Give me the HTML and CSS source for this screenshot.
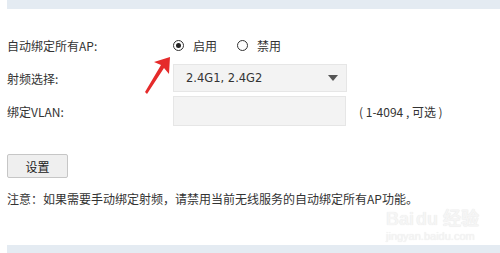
FILE: index.html
```html
<!DOCTYPE html>
<html lang="zh-CN">
<head>
    <meta charset="UTF-8">
    <title>自动绑定射频</title>
    <link rel="stylesheet" href="styles.css">
</head>
<body>
    <div class="bar"></div>

    <div class="form">
        <div class="row">
            <div class="label">自动绑定所有AP:</div>
            <div class="radios">
                <label class="radio"><span class="dot checked"></span>启用</label>
                <label class="radio"><span class="dot"></span>禁用</label>
            </div>
        </div>
        <div class="row">
            <div class="label">射频选择:</div>
            <div class="box select">
                <span>2.4G1, 2.4G2</span>
                <span class="caret"></span>
            </div>
        </div>
        <div class="row">
            <div class="label">绑定VLAN:</div>
            <div class="box"></div>
            <span class="hint">( 1-4094 , 可选 )</span>
        </div>
    </div>

    <button class="btn">设置</button>

    <p class="note">注意：如果需要手动绑定射频，请禁用当前无线服务的自动绑定所有AP功能。</p>

    <div class="watermark">
        <div class="wm-logo">Bai<span class="wm-du">du</span> 经验</div>
        <div class="wm-url">jingyan.baidu.com</div>
    </div>

    <div class="bar bottom"></div>

    <svg class="arrow" width="40" height="50" viewBox="0 0 40 50">
        <polygon points="30,6 29,23 24,17 7,43 5,41 21,14 14,11" fill="#e52b2b"/>
    </svg>
</body>
</html>
```

FILE: styles.css
```css
body {
    margin: 0;
    padding: 0 0 0 7px;
    width: 493px;
    height: 253px;
    overflow: hidden;
    position: relative;
    background: #fff;
    color: #333;
    font-family: "Noto Sans CJK SC", "Noto Sans", sans-serif;
    font-size: 12px;
}
.bar {
    height: 9px;
    background: #e4ebf2;
}
.bar.bottom {
    position: absolute;
    left: 7px;
    right: 0;
    bottom: 0;
    height: 8px;
}
.form {
    margin-top: 22px;
    display: flex;
    flex-direction: column;
    gap: 5px;
}
.row {
    display: flex;
    align-items: center;
    height: 28px;
}
.label {
    width: 166px;
}
.radios {
    display: flex;
    gap: 20px;
}
.radio {
    display: flex;
    align-items: center;
    gap: 9px;
}
.dot {
    width: 9px;
    height: 9px;
    border: 1px solid #333;
    border-radius: 50%;
    position: relative;
}
.dot.checked::after {
    content: "";
    position: absolute;
    left: 2px;
    top: 2px;
    width: 5px;
    height: 5px;
    border-radius: 50%;
    background: #222;
}
.box {
    width: 171px;
    height: 26px;
    background: #f3f3f3;
    border: 1px solid #e6e6e6;
    box-sizing: content-box;
}
.select {
    display: flex;
    align-items: center;
    justify-content: space-between;
    padding: 0 8px 0 12px;
    width: 152px;
    font-family: "DejaVu Sans", sans-serif;
    font-size: 11.5px;
    color: #333;
}
.caret {
    width: 0;
    height: 0;
    border-left: 5px solid transparent;
    border-right: 5px solid transparent;
    border-top: 6px solid #555;
}
.row:last-child .box {
    height: 28px;
}
.hint {
    margin-left: 13px;
}
.btn {
    display: block;
    margin-top: 29px;
    width: 61px;
    height: 24px;
    background: #efefef;
    border: 1px solid #c6c6c6;
    border-radius: 2px;
    font: inherit;
    color: #222;
    padding: 0;
}
.note {
    margin: 12px 0 0;
    line-height: 18px;
}
.watermark {
    position: absolute;
    left: 386px;
    top: 208px;
    color: #f5f5f5;
    text-shadow: 0 0 1px #e2e2e2;
}
.wm-logo {
    font-family: "Liberation Sans", sans-serif;
    font-size: 18px;
    font-weight: bold;
    line-height: 22px;
}
.wm-du {
    margin-left: 2px;
}
.wm-url {
    font-family: "Liberation Sans", sans-serif;
    font-size: 11px;
    line-height: 12px;
}
.arrow {
    position: absolute;
    left: 140px;
    top: 51px;
}
```
